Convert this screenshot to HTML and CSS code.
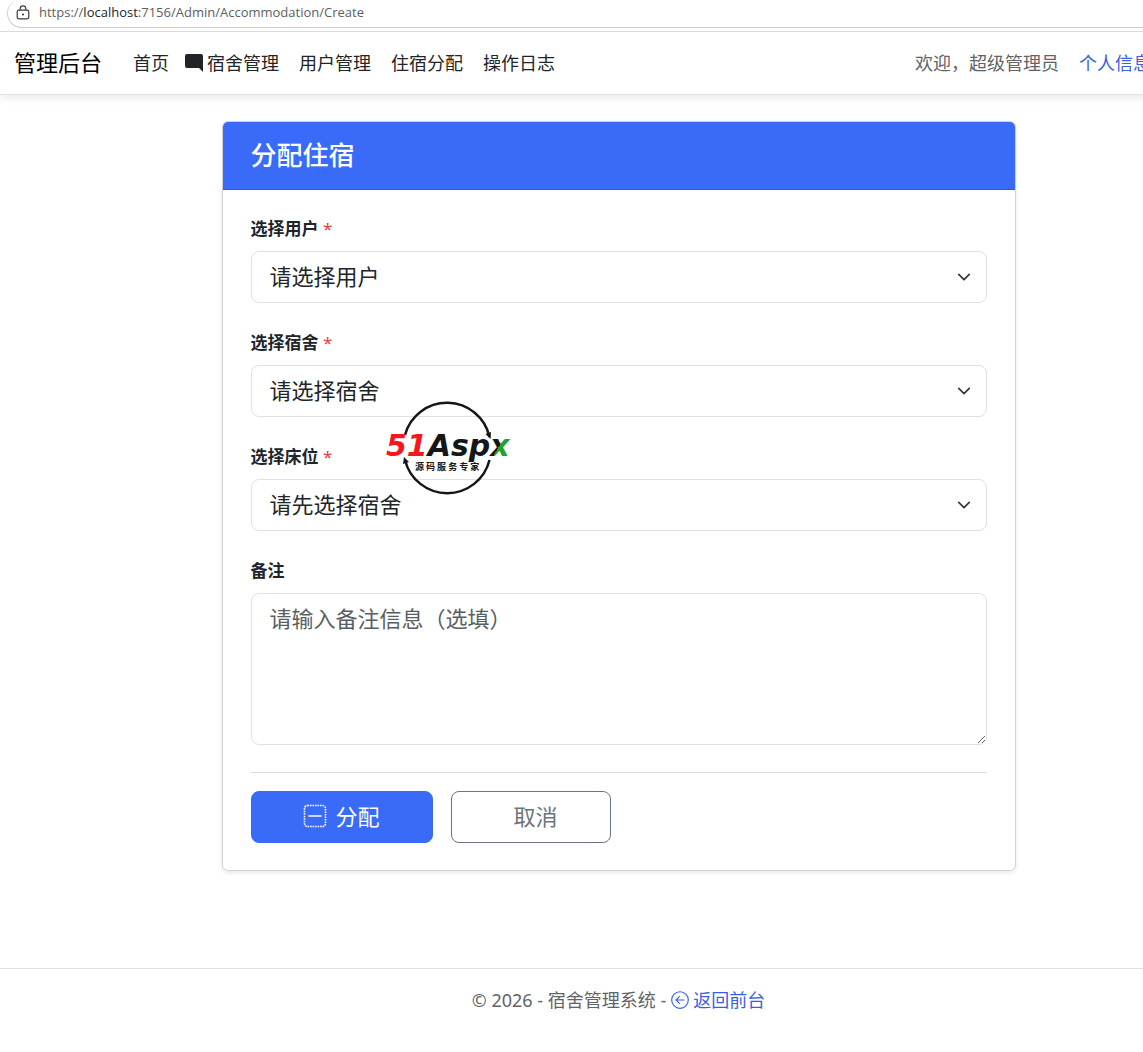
FILE: index.html
```html
<!DOCTYPE html>
<html lang="zh-CN">
<head>
<meta charset="utf-8">
<meta name="viewport" content="width=device-width, initial-scale=1">
<title>分配住宿</title>
<link rel="stylesheet" href="styles.css">
</head>
<body>
<div class="viewport">
  <div class="address-bar">
    <div class="address-pill">
      <svg class="lock" viewBox="0 0 14 15" fill="none" stroke="#3c3c3c" stroke-width="1.2"><rect x="1.2" y="5.2" width="11.6" height="8.6" rx="1.8"/><path d="M4.2 5V3.6a2.8 2.8 0 0 1 5.6 0V5"/><circle cx="7" cy="9.5" r=".5" fill="#3c3c3c"/></svg>
      <span class="url">https://<span class="url-host">localhost</span>:7156/Admin/Accommodation/Create</span>
    </div>
  </div>

  <div class="page">
    <header class="navbar">
      <a class="brand" href="#">管理后台</a>
      <nav class="nav">
        <a class="nav-home" href="#">首页</a>
        <a class="nav-link" href="#"><svg class="nav-icon" viewBox="0 0 18 18"><path d="M2 0h14a2 2 0 0 1 2 2v16l-4-4H2a2 2 0 0 1-2-2V2a2 2 0 0 1 2-2z" fill="#212529"/></svg>宿舍管理</a>
        <a class="nav-link" href="#">用户管理</a>
        <a class="nav-link" href="#">住宿分配</a>
        <a class="nav-link" href="#">操作日志</a>
      </nav>
      <div class="account">
        <span class="welcome">欢迎，超级管理员</span>
        <a class="link" href="#">个人信息</a>
      </div>
    </header>

    <main class="card">
      <h1 class="card-title">分配住宿</h1>
      <form class="card-body">
        <div class="field">
          <label for="user">选择用户 <span class="required">*</span></label>
          <select id="user" class="control"><option>请选择用户</option></select>
        </div>
        <div class="field">
          <label for="dorm">选择宿舍 <span class="required">*</span></label>
          <select id="dorm" class="control"><option>请选择宿舍</option></select>
        </div>
        <div class="field">
          <label for="bed">选择床位 <span class="required">*</span></label>
          <select id="bed" class="control"><option>请先选择宿舍</option></select>
        </div>
        <div class="field">
          <label for="note">备注</label>
          <textarea id="note" class="control note" placeholder="请输入备注信息（选填）"></textarea>
        </div>
        <div class="actions">
          <button type="submit" class="btn btn-primary"><svg class="btn-icon" viewBox="0 0 24 24" fill="none" stroke="#fff"><rect x="1.5" y="1.5" width="21" height="21" rx="3" stroke-width="1.6" stroke-dasharray="1.6 .9"/><path d="M6 12h12" stroke-width="1.6" stroke-linecap="round"/></svg>分配</button>
          <button type="button" class="btn btn-outline">取消</button>
        </div>
      </form>
      <svg class="watermark" viewBox="0 0 128 94" role="img" aria-label="51Aspx 源码服务专家">
        <defs><linearGradient id="x-fill" gradientUnits="userSpaceOnUse" x1="104" y1="38" x2="124" y2="50"><stop offset=".5" stop-color="#161616"/><stop offset=".5" stop-color="#22a12c"/></linearGradient></defs>
        <g fill="none" stroke="#161616" stroke-width="2.5"><path d="M19 34a43.500 43.500 0 0 1 84.500 2"/><path d="M103.500 59a43.500 43.500 0 0 1-84.500 0"/></g>
        <path d="M99.500 33l5.500-2-.5 7zM17 63l1-7 5 5z" fill="#161616"/>
        <text class="logo-name" x="0" y="55"><tspan fill="#f5171b">51</tspan><tspan fill="#161616">Asp</tspan><tspan fill="url(#x-fill)">x</tspan></text>
        <text class="logo-tagline" x="29" y="69">源 码 服 务 专 家</text>
      </svg>
    </main>

    <footer class="footer">
      <span>© 2026 - 宿舍管理系统 -</span>
      <a class="link footer-link" href="#"><svg class="back-icon" viewBox="0 0 18 18" fill="none" stroke="#3a5fe0" stroke-width="1.15" stroke-linecap="round" stroke-linejoin="round"><circle cx="9" cy="9" r="8.3"/><path d="M13 9H5.200M8.400 5.600L5 9l3.400 3.400"/></svg>返回前台</a>
    </footer>
  </div>
</div>
</body>
</html>
```
FILE: styles.css
```css
* { box-sizing: border-box; }

body {
  margin: 0;
  background: #fff;
  color: #212529;
  font: 18px/26px "Noto Sans", "Noto Sans CJK SC", sans-serif;
}

a { color: inherit; text-decoration: none; }

.viewport { min-height: 100vh; overflow: hidden; }

.address-bar { height: 32px; padding-left: 7px; border-bottom: 1px solid #dcdcdc; }
.address-pill {
  display: flex;
  align-items: center;
  gap: 9px;
  height: 28px;
  padding: 0 0 3px 8px;
  border: solid #cfcfcf;
  border-width: 0 0 1px 1px;
  border-radius: 14px 0 0 16px;
}
.lock { width: 14px; height: 15px; }
.url { color: #606060; font: 13px/20px "Open Sans", sans-serif; }
.url-host { color: #1f1f1f; }

/* The application is wider than the window and runs off its right edge. */
.page { width: calc(100% + 94px); }

.navbar {
  display: flex;
  align-items: center;
  height: 63px;
  padding: 0 14px;
  border-bottom: 1px solid #dee2e6;
  box-shadow: 0 4px 8px rgba(0, 0, 0, .07);
}
.brand { color: #000; font-size: 22px; line-height: 30px; padding-bottom: 2px; }
.nav { display: flex; gap: 20px; margin-left: 31px; }
.nav-home { margin-right: -4px; }
.nav-link { display: flex; align-items: center; gap: 4px; }
.nav-icon { width: 18px; height: 18px; }
.account { display: flex; gap: 20px; margin-left: auto; padding-right: 72px; }
.welcome { color: #5f6468; }
.link { color: #3a5fe0; }

.card {
  position: relative;
  max-width: 794px;
  margin: 26px auto 97px;
  border: 1px solid #d0d2d4;
  border-radius: 6px;
  box-shadow: 0 2px 4px rgba(0, 0, 0, .09);
}
.card-title {
  margin: 0;
  padding: 16px 28px;
  border-bottom: 1px solid #2f58cc;
  border-radius: 5px 5px 0 0;
  background: #396bf8;
  color: #fff;
  font-size: 26px;
  font-weight: 500;
  line-height: 35px;
}
.card-body { padding: 26px 28px 27px; }

.field { display: flex; flex-direction: column; gap: 9px; margin-bottom: 27px; }
.field label { font-size: 17px; font-weight: 700; }
.required { color: #d9434e; font-weight: 400; }
.control {
  width: 100%;
  height: 52px;
  padding: 7px 18px 9px;
  border: 1px solid #dee2e6;
  border-radius: 8px;
  background: #fff;
  color: #212529;
  font: inherit;
  font-size: 22px;
  line-height: 34px;
}
select.control {
  appearance: none;
  background: #fff url("data:image/svg+xml,%3Csvg xmlns='http://www.w3.org/2000/svg' viewBox='0 0 16 16'%3E%3Cpath fill='none' stroke='%23343a40' stroke-linecap='round' stroke-linejoin='round' stroke-width='2' d='m2 5 6 6 6-6'/%3E%3C/svg%3E") no-repeat right 15px center / 14px 14px;
}
.note { height: 152px; resize: vertical; }
.note::placeholder { color: #595e63; opacity: 1; }

.actions {
  display: flex;
  gap: 18px;
  padding-top: 18px;
  border-top: 1px solid #dcdee0;
}
.btn {
  display: flex;
  align-items: center;
  justify-content: center;
  gap: 8px;
  height: 52px;
  padding: 0 6px 2px;
  border: 1px solid #6c757d;
  border-radius: 8px;
  background: #fff;
  color: #6c757d;
  font: inherit;
  font-size: 22px;
}
.btn-primary { width: 182px; border-color: #396bf8; background: #396bf8; color: #fff; }
.btn-outline { width: 160px; padding-left: 16px; }
.btn-icon { width: 24px; height: 24px; }

.watermark { position: absolute; top: 279px; left: 163px; width: 128px; height: 94px; pointer-events: none; }
.logo-name { font: italic 700 30px "DejaVu Sans", sans-serif; }
.logo-tagline { fill: #161616; font: 700 9px "Noto Sans CJK SC", sans-serif; }

.footer {
  display: flex;
  justify-content: center;
  gap: 5px;
  padding: 18px 0 27px;
  border-top: 1px solid #dee2e6;
  color: #5f6468;
}
.footer-link { display: flex; align-items: center; gap: 4px; }
.back-icon { width: 18px; height: 18px; }
```
